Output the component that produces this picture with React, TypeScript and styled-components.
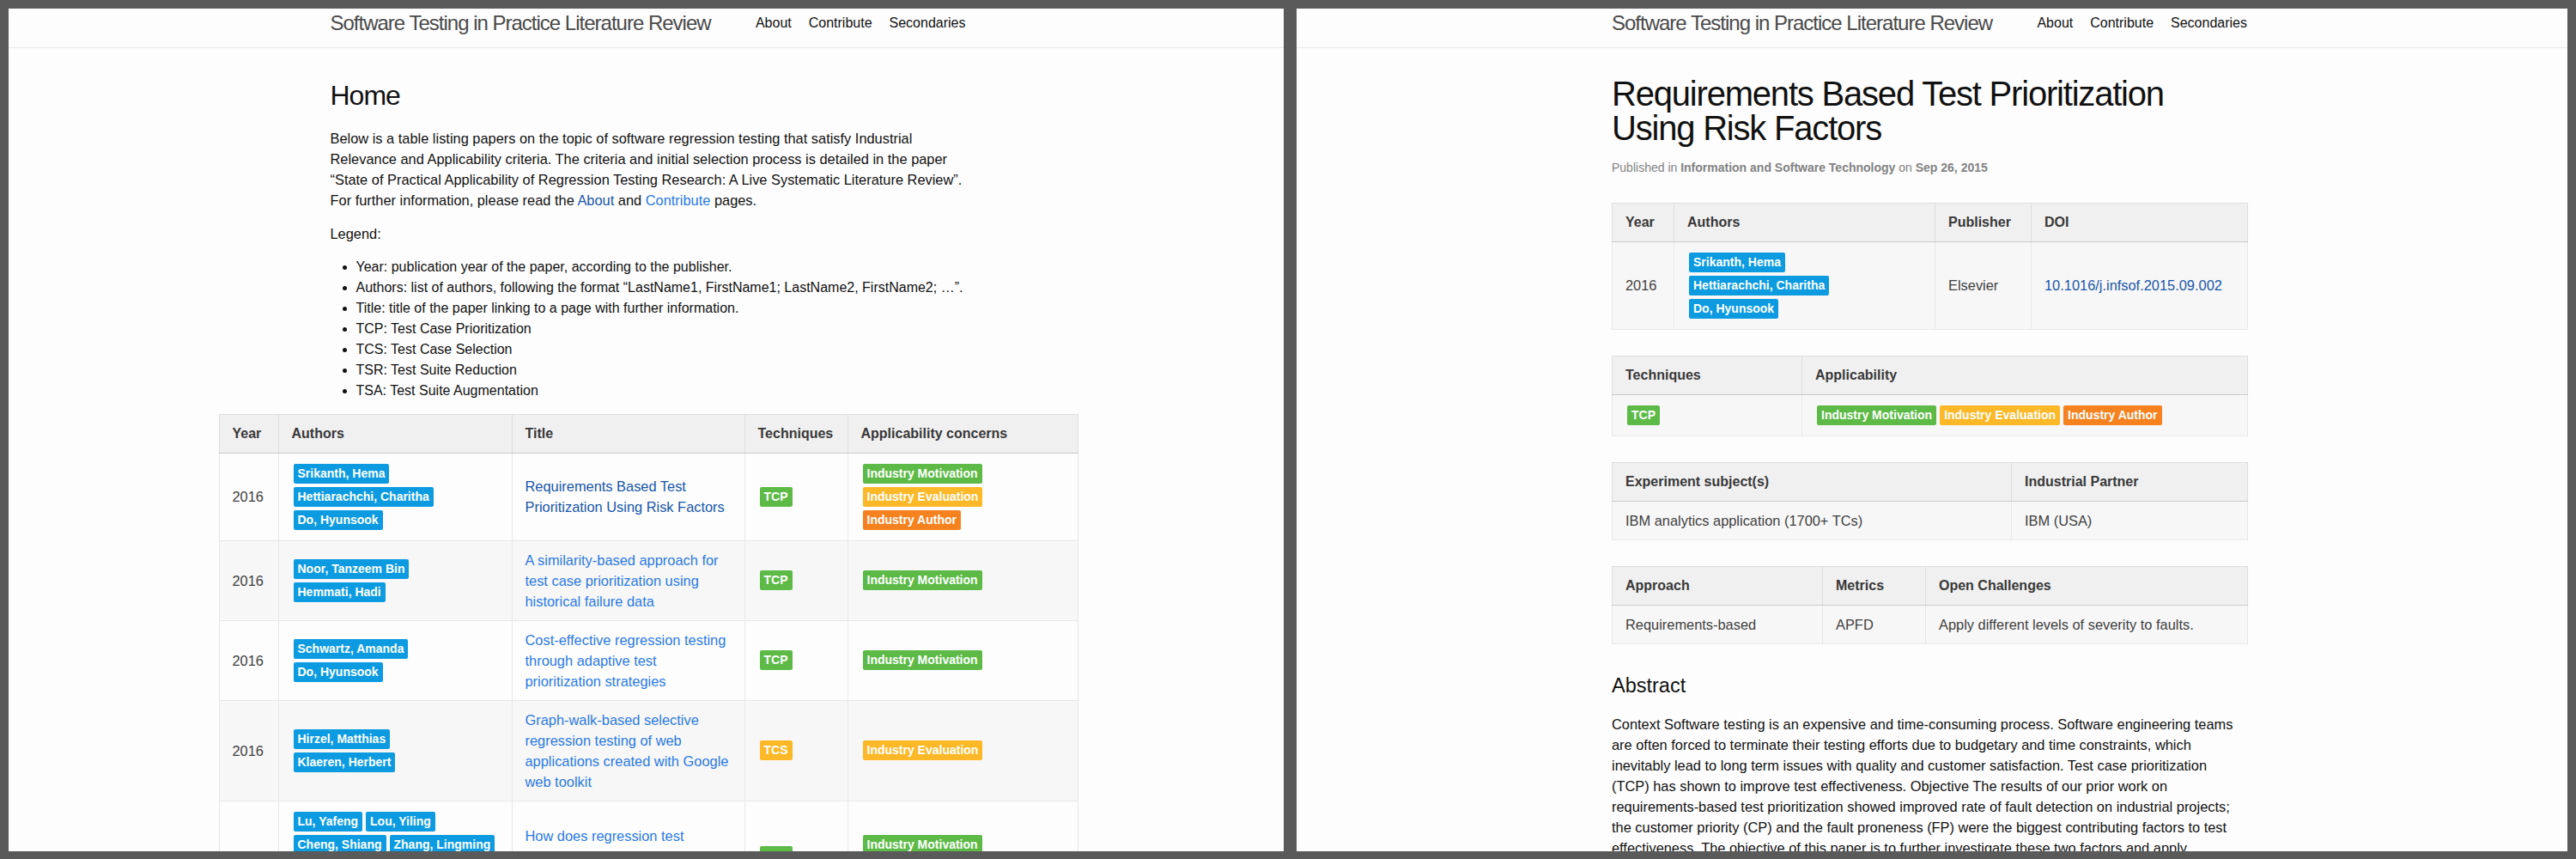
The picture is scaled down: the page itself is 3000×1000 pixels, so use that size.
import React from "react";
import styled, { createGlobalStyle, css } from "styled-components";

const GlobalStyle = createGlobalStyle`
  html, body { margin: 0; padding: 0; }
  body {
    background: #5a5a5a;
    font-family: "Liberation Sans", Arial, Helvetica, sans-serif;
    font-size: 16.4px;
    line-height: 24px;
    color: #111;
  }
  * { box-sizing: border-box; }
`;

const Desktop = styled.div`
  display: flex;
  gap: 15px;
  padding: 10px 10px 9px 10px;
  height: 1000px;
`;

const Panel = styled.div<{ $w: number }>`
  width: ${(p) => p.$w}px;
  flex: none;
  height: 981px;
  background: #fdfdfd;
  overflow: hidden;
`;

const Header = styled.header`
  height: 46px;
  border-bottom: 1px solid #e8e8e8;
`;

const Wrapper = styled.div<{ $shift: number }>`
  width: 740px;
  margin-left: calc(50% - 370px + ${(p) => p.$shift}px);
`;

const HeaderRow = styled(Wrapper)`
  display: flex;
  justify-content: space-between;
  align-items: flex-start;
`;

const Brand = styled.a`
  font-size: 24px;
  line-height: 34px;
  letter-spacing: -1px;
  font-weight: 300;
  color: #4a4a4a;
  text-decoration: none;
  white-space: nowrap;
`;

const Nav = styled.nav`
  display: flex;
  gap: 20px;
  padding-top: 5px;
`;

const NavLink = styled.a`
  color: #111;
  font-size: 16px;
  text-decoration: none;
  line-height: 24px;
`;

const Main = styled.main`
  padding-top: 32.5px;
`;

const PageTitle = styled.h1<{ $big?: boolean }>`
  margin: 0 0 15px;
  font-weight: 400;
  color: #111;
  ${(p) =>
    p.$big
      ? css`
          font-size: 40px;
          line-height: 40.5px;
          letter-spacing: -1.2px;
        `
      : css`
          font-size: 32px;
          line-height: 45px;
          letter-spacing: -1px;
        `}
`;

const Para = styled.p`
  margin: 0 0 15px;
`;

const Link = styled.a<{ $visited?: boolean }>`
  color: ${(p) => (p.$visited ? "#1756a9" : "#2a7ae2")};
  text-decoration: none;
`;

const Legend = styled.ul`
  margin: 0 0 15px 30px;
  padding: 0;
  font-size: 16px;
  white-space: nowrap;
`;

const Meta = styled.p`
  margin: 0 0 30px;
  font-size: 14px;
  line-height: 21px;
  color: #828282;
  b { font-weight: 700; }
`;

const SectionTitle = styled.h2`
  margin: 0 0 15px;
  font-size: 23.5px;
  line-height: 36px;
  font-weight: 400;
  color: #111;
`;

const Table = styled.table<{ $w: number; $shift?: number; $wide?: boolean }>`
  width: ${(p) => p.$w}px;
  table-layout: fixed;
  border-collapse: collapse;
  border: 1px solid #e8e8e8;
  margin: 0 0 30px;
  color: #3f3f3f;
  ${(p) =>
    p.$wide &&
    css`
      margin-left: calc(50% - ${p.$w / 2}px + ${p.$shift ?? 0}px);
    `}
`;

const Col = styled.col<{ $w: number }>`
  width: ${(p) => p.$w}px;
`;

const Th = styled.th`
  background: #f0f0f0;
  border: 1px solid #dedede;
  border-bottom-color: #c9c9c9;
  padding: 10px 15px;
  text-align: left;
  font-size: 16px;
  font-weight: 700;
  color: #383838;
  vertical-align: middle;
`;

const Tr = styled.tr<{ $shade?: boolean }>`
  background: ${(p) => (p.$shade ? "#f7f7f7" : "transparent")};
`;

const Td = styled.td`
  border: 1px solid #e8e8e8;
  padding: 10px 15px;
  vertical-align: middle;
`;

const BadgeStack = styled.div`
  display: flex;
  flex-direction: column;
  align-items: flex-start;
  gap: 4px;
  padding: 2px 0 2px 2px;
`;

const BadgeLine = styled.div`
  display: flex;
  gap: 4px;
`;

type Tone = "blue" | "green" | "yellow" | "orange";
const toneColor: Record<Tone, string> = {
  blue: "#0c9be0",
  green: "#5dba47",
  yellow: "#fdb827",
  orange: "#f5821f",
};

const Badge = styled.span<{ $tone: Tone }>`
  display: inline-block;
  background: ${(p) => toneColor[p.$tone]};
  color: #fff;
  font-weight: 700;
  font-size: 14px;
  line-height: 17px;
  padding: 3px 5px;
  border-radius: 2px;
  white-space: nowrap;
`;

const applicTone: Record<string, Tone> = {
  "Industry Motivation": "green",
  "Industry Evaluation": "yellow",
  "Industry Author": "orange",
};
const techTone: Record<string, Tone> = {
  TCP: "green",
  TCS: "yellow",
  TSR: "orange",
  TSA: "blue",
};

const Badges = ({ lines, tone }: { lines: string[][]; tone: (s: string) => Tone }) => (
  <BadgeStack>
    {lines.map((line, i) => (
      <BadgeLine key={i}>
        {line.map((s) => (
          <Badge key={s} $tone={tone(s)}>
            {s}
          </Badge>
        ))}
      </BadgeLine>
    ))}
  </BadgeStack>
);

const stack = (items: string[]) => items.map((s) => [s]);

const papers = [
  {
    year: 2016,
    authors: stack(["Srikanth, Hema", "Hettiarachchi, Charitha", "Do, Hyunsook"]),
    title: "Requirements Based Test Prioritization Using Risk Factors",
    visited: true,
    tech: ["TCP"],
    applic: ["Industry Motivation", "Industry Evaluation", "Industry Author"],
  },
  {
    year: 2016,
    authors: stack(["Noor, Tanzeem Bin", "Hemmati, Hadi"]),
    title: "A similarity-based approach for test case prioritization using historical failure data",
    tech: ["TCP"],
    applic: ["Industry Motivation"],
  },
  {
    year: 2016,
    authors: stack(["Schwartz, Amanda", "Do, Hyunsook"]),
    title: "Cost-effective regression testing through adaptive test prioritization strategies",
    tech: ["TCP"],
    applic: ["Industry Motivation"],
  },
  {
    year: 2016,
    authors: stack(["Hirzel, Matthias", "Klaeren, Herbert"]),
    title: "Graph-walk-based selective regression testing of web applications created with Google web toolkit",
    tech: ["TCS"],
    applic: ["Industry Evaluation"],
  },
  {
    year: 2016,
    authors: [
      ["Lu, Yafeng", "Lou, Yiling"],
      ["Cheng, Shiang", "Zhang, Lingming"],
      ["Hao, Dan", "Zhou, Yangfan"],
      ["Zhang, Lu"],
    ],
    title: "How does regression test prioritization perform in real-world software evolution?",
    tech: ["TCP"],
    applic: ["Industry Motivation", "Industry Evaluation"],
  },
];

const legend = [
  "Year: publication year of the paper, according to the publisher.",
  "Authors: list of authors, following the format \u201CLastName1, FirstName1; LastName2, FirstName2; \u2026\u201D.",
  "Title: title of the paper linking to a page with further information.",
  "TCP: Test Case Prioritization",
  "TCS: Test Case Selection",
  "TSR: Test Suite Reduction",
  "TSA: Test Suite Augmentation",
];

const SiteHeader = ({ shift }: { shift: number }) => (
  <Header>
    <HeaderRow $shift={shift}>
      <Brand>Software Testing in Practice Literature Review</Brand>
      <Nav>
        <NavLink>About</NavLink>
        <NavLink>Contribute</NavLink>
        <NavLink>Secondaries</NavLink>
      </Nav>
    </HeaderRow>
  </Header>
);

const HomePage = () => (
  <Panel $w={1485}>
    <SiteHeader shift={2} />
    <Main>
      <Wrapper $shift={2}>
        <PageTitle>Home</PageTitle>
        <Para>
          Below is a table listing papers on the topic of software regression testing that satisfy Industrial
          Relevance and Applicability criteria. The criteria and initial selection process is detailed in the paper
          {" \u201C"}State of Practical Applicability of Regression Testing Research: A Live Systematic Literature
          Review{"\u201D"}. For further information, please read the <Link $visited>About</Link> and{" "}
          <Link>Contribute</Link> pages.
        </Para>
        <Para>Legend:</Para>
        <Legend>
          {legend.map((l) => (
            <li key={l}>{l}</li>
          ))}
        </Legend>
      </Wrapper>
      <Table $w={1000} $wide $shift={2}>
        <colgroup>
          <Col $w={69} />
          <Col $w={272} />
          <Col $w={271} />
          <Col $w={120} />
          <Col $w={268} />
        </colgroup>
        <thead>
          <tr>
            <Th>Year</Th>
            <Th>Authors</Th>
            <Th>Title</Th>
            <Th>Techniques</Th>
            <Th>Applicability concerns</Th>
          </tr>
        </thead>
        <tbody>
          {papers.map((p, i) => (
            <Tr key={p.title} $shade={i % 2 === 1}>
              <Td>{p.year}</Td>
              <Td>
                <Badges lines={p.authors} tone={() => "blue"} />
              </Td>
              <Td>
                <Link $visited={p.visited}>{p.title}</Link>
              </Td>
              <Td>
                <Badges lines={stack(p.tech)} tone={(s) => techTone[s]} />
              </Td>
              <Td>
                <Badges lines={stack(p.applic)} tone={(s) => applicTone[s]} />
              </Td>
            </Tr>
          ))}
        </tbody>
      </Table>
    </Main>
  </Panel>
);

const PaperPage = () => (
  <Panel $w={1480}>
    <SiteHeader shift={-3} />
    <Main>
      <Wrapper $shift={-3}>
        <PageTitle $big>Requirements Based Test Prioritization Using Risk Factors</PageTitle>
        <Meta>
          Published in <b>Information and Software Technology</b> on <b>Sep 26, 2015</b>
        </Meta>

        <Table $w={740}>
          <colgroup>
            <Col $w={72} />
            <Col $w={304} />
            <Col $w={112} />
            <Col $w={252} />
          </colgroup>
          <tbody>
            <tr>
              <Th>Year</Th>
              <Th>Authors</Th>
              <Th>Publisher</Th>
              <Th>DOI</Th>
            </tr>
            <Tr $shade>
              <Td>2016</Td>
              <Td>
                <Badges lines={papers[0].authors} tone={() => "blue"} />
              </Td>
              <Td>Elsevier</Td>
              <Td>
                <Link $visited>10.1016/j.infsof.2015.09.002</Link>
              </Td>
            </Tr>
          </tbody>
        </Table>

        <Table $w={740}>
          <colgroup>
            <Col $w={221} />
            <Col $w={519} />
          </colgroup>
          <tbody>
            <tr>
              <Th>Techniques</Th>
              <Th>Applicability</Th>
            </tr>
            <Tr $shade>
              <Td>
                <Badges lines={[["TCP"]]} tone={(s) => techTone[s]} />
              </Td>
              <Td>
                <Badges lines={[papers[0].applic]} tone={(s) => applicTone[s]} />
              </Td>
            </Tr>
          </tbody>
        </Table>

        <Table $w={740}>
          <colgroup>
            <Col $w={465} />
            <Col $w={275} />
          </colgroup>
          <tbody>
            <tr>
              <Th>Experiment subject(s)</Th>
              <Th>Industrial Partner</Th>
            </tr>
            <Tr $shade>
              <Td>IBM analytics application (1700+ TCs)</Td>
              <Td>IBM (USA)</Td>
            </Tr>
          </tbody>
        </Table>

        <Table $w={740}>
          <colgroup>
            <Col $w={245} />
            <Col $w={120} />
            <Col $w={375} />
          </colgroup>
          <tbody>
            <tr>
              <Th>Approach</Th>
              <Th>Metrics</Th>
              <Th>Open Challenges</Th>
            </tr>
            <Tr $shade>
              <Td>Requirements-based</Td>
              <Td>APFD</Td>
              <Td>Apply different levels of severity to faults.</Td>
            </Tr>
          </tbody>
        </Table>

        <SectionTitle>Abstract</SectionTitle>
        <Para>
          Context Software testing is an expensive and time-consuming process. Software engineering teams are often
          forced to terminate their testing efforts due to budgetary and time constraints, which inevitably lead to
          long term issues with quality and customer satisfaction. Test case prioritization (TCP) has shown to improve
          test effectiveness. Objective The results of our prior work on requirements-based test prioritization showed
          improved rate of fault detection on industrial projects; the customer priority (CP) and the fault proneness
          (FP) were the biggest contributing factors to test effectiveness. The objective of this paper is to further
          investigate these two factors and apply prioritization based on these factors in a different domain: an
          industrial, non-critical system.
        </Para>
      </Wrapper>
    </Main>
  </Panel>
);

export default function App() {
  return (
    <>
      <GlobalStyle />
      <Desktop>
        <HomePage />
        <PaperPage />
      </Desktop>
    </>
  );
}
